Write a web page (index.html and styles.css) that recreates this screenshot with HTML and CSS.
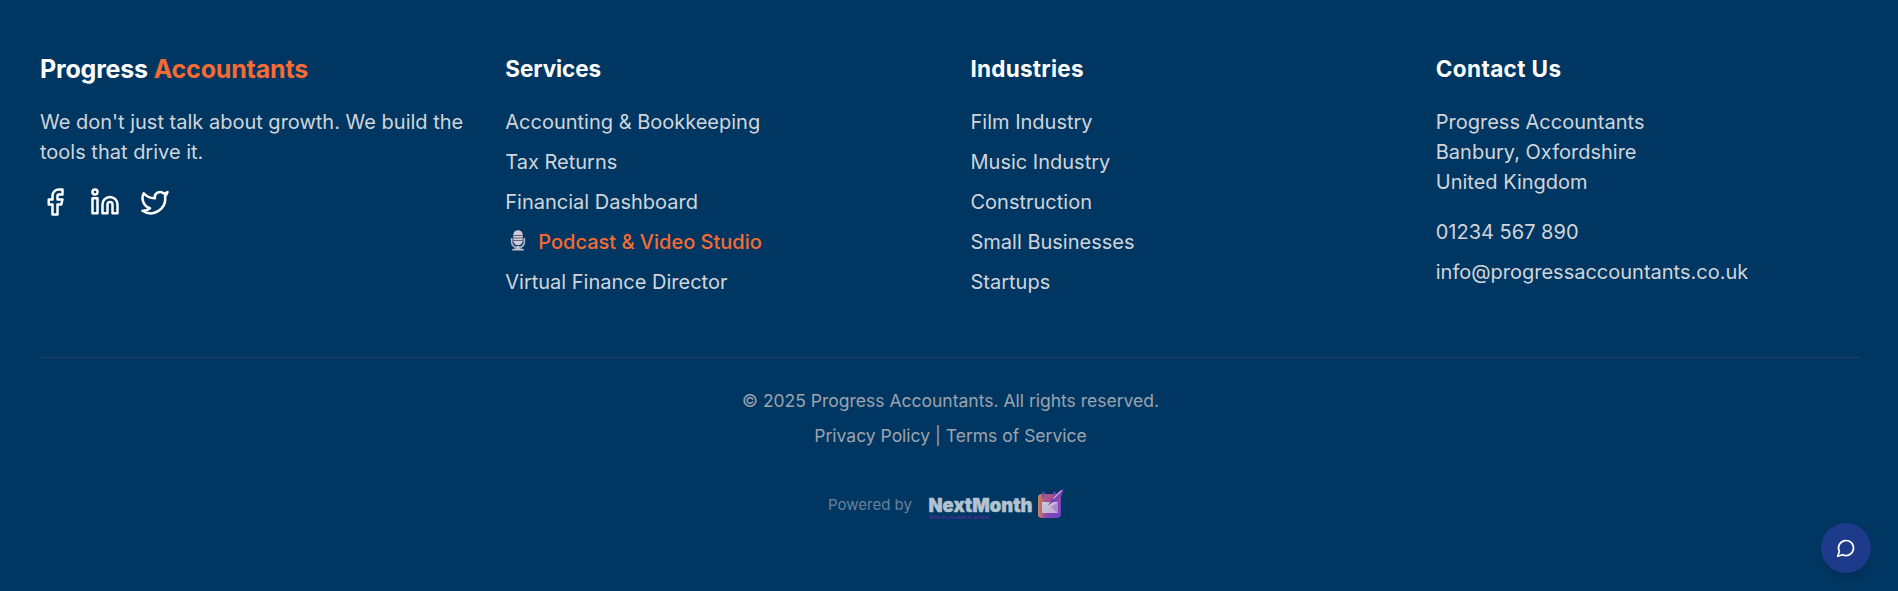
FILE: index.html
```html
<!DOCTYPE html>
<html lang="en">
<head>
<meta charset="utf-8">
<title>Progress Accountants</title>
<link rel="stylesheet" href="styles.css">
</head>
<body>
<footer class="footer">
  <div class="columns">
    <section class="col">
      <div class="brand">Progress <span class="accent">Accountants</span></div>
      <p class="text">We don't just talk about growth. We build the tools that drive it.</p>
      <div class="social">
        <svg class="icon" viewBox="0 0 24 24"><path d="M18 2h-3a5 5 0 0 0-5 5v3H7v4h3v8h4v-8h3l1-4h-4V7a1 1 0 0 1 1-1h3z"/></svg>
        <svg class="icon" viewBox="0 0 24 24"><path d="M16 8a6 6 0 0 1 6 6v7h-4v-7a2 2 0 0 0-2-2 2 2 0 0 0-2 2v7h-4v-7a6 6 0 0 1 6-6z"/><rect x="2" y="9" width="4" height="12"/><circle cx="4" cy="4" r="2"/></svg>
        <svg class="icon" viewBox="0 0 24 24"><path d="M22 4s-.7 2.1-2 3.4c1.6 10-9.4 17.3-18 11.6 2.2.1 4.4-.6 6-2C3 15.5.5 9.6 3 5c2.2 2.6 5.6 4.1 9 4-.9-4.2 4-6.6 7-3.8 1.1 0 3-1.2 3-1.2z"/></svg>
      </div>
    </section>
    <section class="col">
      <h3 class="heading"><span class="h-services">Services</span></h3>
      <ul class="list">
        <li>Accounting &amp; Bookkeeping</li>
        <li>Tax Returns</li>
        <li>Financial Dashboard</li>
        <li class="studio">
          <svg class="mic" viewBox="0 0 26 24">
            <path d="M6.700 9v4.200a6.300 5.600 0 0 0 12.600 0V9" fill="none" stroke="#b7b3c8" stroke-width="1.700"/>
            <rect x="8.300" y="1.300" width="9.400" height="15" rx="4.500" fill="#d0cbda"/>
            <path d="M8.300 6.500h9.400M8.300 9h9.400M8.300 11.500h9.400" stroke="#5c5870" stroke-width=".9"/>
            <path d="M11.500 17h3v2.200l4.200.9v1.500H7.300v-1.500l4.200-.9z" fill="#c5c0d0"/>
          </svg>
          <span>Podcast &amp; Video Studio</span>
        </li>
        <li>Virtual Finance Director</li>
      </ul>
    </section>
    <section class="col">
      <h3 class="heading"><span class="h-industries">Industries</span></h3>
      <ul class="list">
        <li>Film Industry</li>
        <li>Music Industry</li>
        <li>Construction</li>
        <li>Small Businesses</li>
        <li>Startups</li>
      </ul>
    </section>
    <section class="col">
      <h3 class="heading"><span class="h-contact">Contact Us</span></h3>
      <address class="address">Progress Accountants<br>Banbury, Oxfordshire<br>United Kingdom</address>
      <ul class="list">
        <li>01234 567 890</li>
        <li>info@progressaccountants.co.uk</li>
      </ul>
    </section>
  </div>
  <div class="bottom">
    <p class="copy">© 2025 Progress Accountants. All rights reserved.</p>
    <p class="legal">Privacy Policy | Terms of Service</p>
    <div class="powered">
      <span>Powered by</span>
      <svg class="nextmonth" viewBox="0 0 150 40">
        <defs>
          <linearGradient id="cal" x1="0" y1="0" x2="1" y2="1">
            <stop offset="0" stop-color="#b95f76"/><stop offset=".35" stop-color="#a8508c"/><stop offset=".7" stop-color="#8045bb"/><stop offset="1" stop-color="#7040ba"/>
          </linearGradient>
          <linearGradient id="warm" x1="0" y1="0" x2="1" y2="0">
            <stop offset="0" stop-color="#cc8858"/><stop offset=".45" stop-color="#a54ca0" stop-opacity="0"/>
          </linearGradient>
          <linearGradient id="page" x1="0" y1="0" x2="1" y2="1">
            <stop offset="0" stop-color="#c9cbdc"/><stop offset="1" stop-color="#c2a5d2"/>
          </linearGradient>
        </defs>
        <text class="nm-name" x="8.500" y="28" textLength="104" lengthAdjust="spacingAndGlyphs">NextMonth</text>
        <text class="nm-tag" x="9" y="34.500" textLength="60" lengthAdjust="spacingAndGlyphs">What do you want to achieve</text>
        <rect x="118" y="10" width="23" height="24" rx="4" fill="url(#cal)"/>
        <rect x="118" y="10" width="23" height="24" rx="4" fill="url(#warm)"/>
        <path d="M122 18h16v11h-16z" fill="url(#page)"/>
        <path d="M131 23l7-5v11z" fill="#a98acd"/>
        <path d="M123.500 8.500v4M134.500 8.500v4" stroke="#6c4dad" stroke-width="2" stroke-linecap="round"/>
        <path d="M128 21.500l7-11 9-6-2.500 7.500-7 5z" fill="#7942b8"/>
        <path d="M133.500 14.500l8-8" stroke="#d2a0c9" stroke-width="1.500"/>
      </svg>
    </div>
  </div>
</footer>
<button class="chat" aria-label="Open chat">
  <svg class="chat-icon" viewBox="0 0 24 24"><path d="M7.900 20A9 9 0 1 0 4 16.100L2 22Z"/></svg>
</button>
</body>
</html>
```
FILE: styles.css
```css
* { box-sizing: border-box; }
body {
  margin: 0;
  overflow: hidden;
  background: #003762;
  font-family: Inter, "Liberation Sans", sans-serif;
  font-size: 20px;
  line-height: 30px;
  color: #d1d5db;
}
p, h3, ul { margin: 0; padding: 0; }
.footer {
  width: 1901px;
  height: 591px;
  padding: 50px 40px 0;
}
.columns {
  display: grid;
  grid-template-columns: repeat(4, 1fr);
  gap: 40px;
  height: 307px;
}
.brand {
  height: 57px;
  font-size: 25px;
  font-weight: 700;
  line-height: 38px;
  color: #fff;
  letter-spacing: -0.18px;
}
.accent { color: #f66b33; }
.social { display: flex; gap: 20px; margin-top: 20px; }
.icon { width: 30px; height: 30px; }
.icon, .chat-icon {
  fill: none;
  stroke: #fff;
  stroke-width: 2;
  stroke-linecap: round;
  stroke-linejoin: round;
}
.heading {
  height: 57px;
  font-size: 22.5px;
  font-weight: 700;
  line-height: 38px;
  color: #fff;
}
.h-services { letter-spacing: -0.08px; }
.h-industries { letter-spacing: 0.25px; }
.h-contact { letter-spacing: 0.4px; }
.list { display: flex; flex-direction: column; gap: 10px; list-style: none; }
.studio { display: flex; gap: 7px; font-weight: 500; color: #f66b33; }
.mic { width: 26px; height: 24px; margin-top: 2px; }
.address { margin-bottom: 20px; font-style: normal; }
.bottom {
  border-top: 1px solid #24405d;
  padding-top: 30px;
  text-align: center;
  font-size: 17.5px;
  line-height: 25px;
  color: #9ca3af;
}
.legal { margin-top: 10px; }
.powered {
  display: flex;
  align-items: center;
  justify-content: center;
  gap: 8px;
  margin-top: 36px;
  padding-right: 3px;
  font-size: 15px;
  color: #68829b;
}
.nextmonth { width: 150px; height: 40px; }
.nm-name {
  font: 900 19px Inter, sans-serif;
  fill: #b3c3d0;
  stroke: #b3c3d0;
  stroke-width: .4px;
}
.nm-tag { font: 500 5px Inter, sans-serif; fill: #6427a4; }
.chat {
  position: fixed;
  left: 1821px;
  top: 523px;
  display: grid;
  place-items: center;
  width: 50px;
  height: 50px;
  padding: 0;
  border: 0;
  border-radius: 50%;
  background: #1e3a8a;
  box-shadow: 0 10px 15px -3px rgba(0, 0, 0, .1), 0 4px 6px -4px rgba(0, 0, 0, .1);
}
.chat-icon { width: 20px; height: 20px; }
```
